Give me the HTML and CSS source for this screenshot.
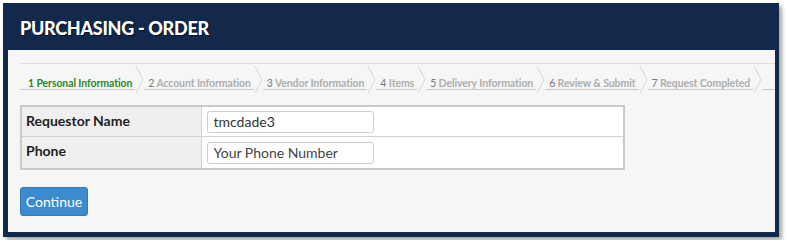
FILE: index.html
```html
<!DOCTYPE html>
<html>
<head>
    <meta charset="UTF-8">
    <title>Purchasing - Order</title>
    <link rel="stylesheet" href="styles.css">
</head>
<body>
<div class="frame">
    <h1 class="title">PURCHASING - ORDER</h1>

    <div class="content">
        <ul class="steps">
            <li class="first active"><a>1 Personal Information</a><svg class="chev" viewBox="0 0 9 27"><polyline points="1,0 8,13.5 1,27"/></svg></li>
            <li><a><em>2</em> Account Information</a><svg class="chev" viewBox="0 0 9 27"><polyline points="1,0 8,13.5 1,27"/></svg></li>
            <li><a><em>3</em> Vendor Information</a><svg class="chev" viewBox="0 0 9 27"><polyline points="1,0 8,13.5 1,27"/></svg></li>
            <li><a><em>4</em> Items</a><svg class="chev" viewBox="0 0 9 27"><polyline points="1,0 8,13.5 1,27"/></svg></li>
            <li><a><em>5</em> Delivery Information</a><svg class="chev" viewBox="0 0 9 27"><polyline points="1,0 8,13.5 1,27"/></svg></li>
            <li><a><em>6</em> Review &amp; Submit</a><svg class="chev" viewBox="0 0 9 27"><polyline points="1,0 8,13.5 1,27"/></svg></li>
            <li><a><em>7</em> Request Completed</a><svg class="chev" viewBox="0 0 9 27"><polyline points="1,0 8,13.5 1,27"/></svg></li>
            <li class="tail"></li>
        </ul>

        <table class="form">
            <tr>
                <th>Requestor Name</th>
                <td><input type="text" value="tmcdade3"></td>
            </tr>
            <tr>
                <th>Phone</th>
                <td><input type="text" placeholder="Your Phone Number"></td>
            </tr>
        </table>

        <button class="btn">Continue</button>
    </div>
</div>
</body>
</html>
```

FILE: styles.css
```css
html, body, div, h1, ul, li, table, th, td {
    margin: 0;
    padding: 0;
}

body {
    background: #fff;
    padding: 3px;
    font-family: "Lato", "Liberation Sans", sans-serif;
}

ul, li {
    list-style: none;
}

.frame {
    width: 776px;
    height: 234px;
    box-sizing: border-box;
    padding: 0 4px 5px 5px;
    background: #13294b;
    box-shadow: 3px 3px 4px rgba(0, 0, 0, 0.35);
    display: flex;
    flex-direction: column;
}

.title {
    height: 47px;
    line-height: 50px;
    padding-left: 12px;
    color: #fff;
    font-size: 18px;
    font-weight: 900;
    letter-spacing: -0.3px;
    text-shadow: 1px 1px 1px rgba(0, 0, 0, 0.6);
}

.content {
    flex: 1;
    background: #f6f6f6;
    padding: 13px 0 0 12px;
    overflow: hidden;
}

/* wizard steps */
.steps {
    display: flex;
    border-top: 1px solid #dedede;
    padding-top: 2px;
}

.steps li {
    display: flex;
    align-items: flex-start;
    flex-shrink: 0;
}

.steps a {
    display: block;
    margin-top: 11px;
    padding: 0 3px 0 4px;
    line-height: 12px;
    font-size: 10.5px;
    font-weight: bold;
    letter-spacing: -0.1px;
    white-space: nowrap;
    color: #adadad;
    border-bottom: 1px solid #c9c9c9;
}

.steps li.first a {
    padding-left: 8px;
}

.steps a em {
    font-style: normal;
    font-weight: normal;
    color: #777;
}

.steps li.active a,
.steps li.active a em {
    color: #2a8a1e;
    font-weight: bold;
}

.steps .chev {
    width: 9px;
    height: 27px;
    fill: none;
    stroke: #d6d6d6;
    stroke-width: 1;
}

.steps li.tail {
    flex: 1 1 auto;
    margin-top: 23px;
    height: 1px;
    background: #c9c9c9;
}

/* form table */
.form {
    margin-top: 12px;
    width: 605px;
    border-collapse: collapse;
    border: 2px solid #c9c9c9;
}

.form th, .form td {
    border: 1px solid #d2d2d2;
    font-size: 14px;
    text-align: left;
}

.form tr:first-child th, .form tr:first-child td {
    height: 29px;
}

.form tr + tr th, .form tr + tr td {
    height: 31px;
}

.form th {
    width: 180px;
    padding-left: 4px;
    background: #efefef;
    color: #222;
    font-weight: bold;
    vertical-align: top;
    padding-top: 5px;
    box-sizing: border-box;
}

.form td {
    background: #fff;
    padding-left: 5px;
}

.form input {
    display: block;
    width: 167px;
    height: 22px;
    box-sizing: border-box;
    padding: 0 6px;
    border: 1px solid #cfcfcf;
    border-radius: 3px;
    background: #fff;
    font-family: "Lato", "Liberation Sans", sans-serif;
    font-size: 14px;
    color: #333;
}

.form input::placeholder {
    color: #444;
}

.btn {
    display: block;
    margin-top: 17px;
    width: 68px;
    height: 29px;
    border: 1px solid #3579b8;
    border-radius: 3px;
    background: #3d8ad0;
    color: #fff;
    font-family: "Lato", "Liberation Sans", sans-serif;
    font-size: 14px;
    padding: 0;
}
```
